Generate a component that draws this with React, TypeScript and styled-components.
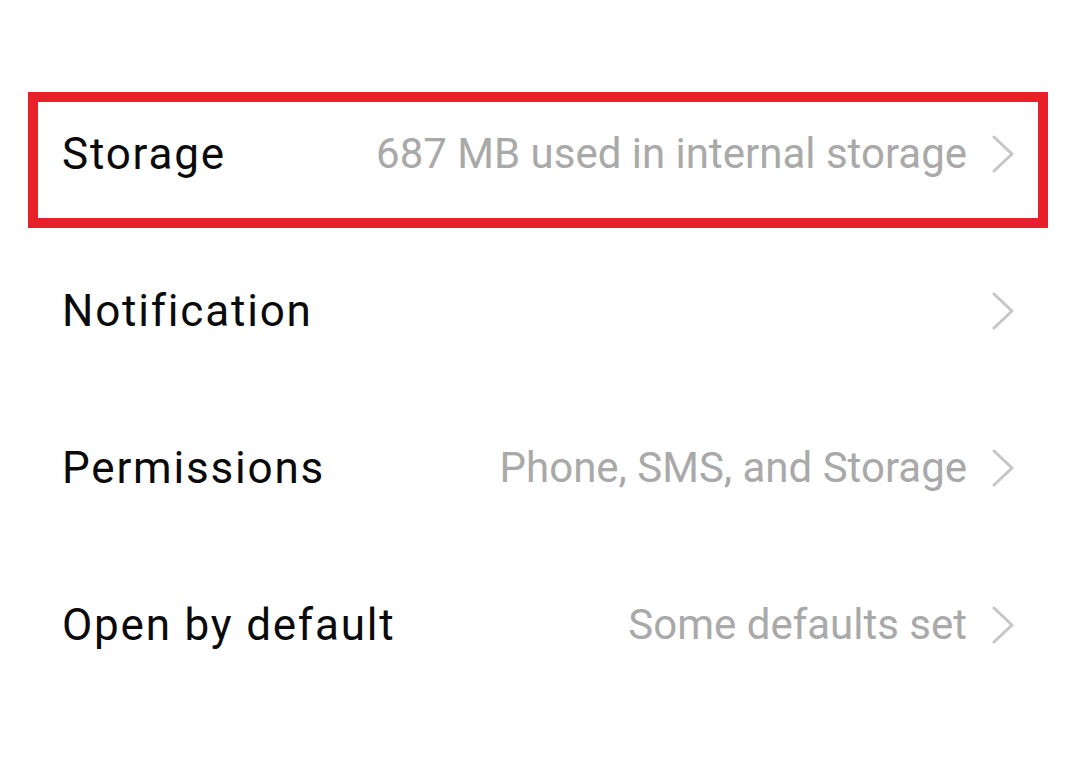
import React from 'react';
import styled, { createGlobalStyle } from 'styled-components';

const GlobalStyle = createGlobalStyle`
  html, body {
    margin: 0;
    padding: 0;
    background: #ffffff;
  }
  body {
    font-family: Roboto, "Noto Sans", "Liberation Sans", sans-serif;
    -webkit-font-smoothing: antialiased;
  }
`;

const Page = styled.div`
  width: 1080px;
  height: 760px;
  background: #ffffff;
  box-sizing: border-box;
  padding: 92px 32px 0 28px;
`;

const List = styled.ul`
  list-style: none;
  margin: 0;
  padding: 0;
  display: flex;
  flex-direction: column;
  gap: 21px;
`;

const Row = styled.li<{ $highlighted?: boolean }>`
  height: 136px;
  box-sizing: border-box;
  border: 10px solid ${(p) => (p.$highlighted ? '#e8202a' : 'transparent')};
  padding: 0 23px 12px 24px;
  display: flex;
  align-items: center;
  gap: 24px;
`;

const Title = styled.span`
  flex: 1;
  font-size: 44px;
  line-height: 1;
  letter-spacing: 1.8px;
  color: #0a0a0a;
  white-space: nowrap;
`;

const Value = styled.span`
  font-size: 42px;
  line-height: 1;
  letter-spacing: 0;
  color: #a9a9a9;
  white-space: nowrap;
`;

const Chevron = () => (
  <svg width="24" height="38" viewBox="0 0 24 38" fill="none">
    <path
      d="M3 2 L21 19 L3 36"
      stroke="#c6c6c6"
      strokeWidth="3"
      strokeLinecap="round"
      strokeLinejoin="round"
    />
  </svg>
);

const items = [
  { title: 'Storage', value: '687 MB used in internal storage', highlighted: true },
  { title: 'Notification', value: '' },
  { title: 'Permissions', value: 'Phone, SMS, and Storage' },
  { title: 'Open by default', value: 'Some defaults set' },
];

export default function App() {
  return (
    <>
      <GlobalStyle />
      <Page>
        <List>
          {items.map((item) => (
            <Row key={item.title} $highlighted={item.highlighted}>
              <Title>{item.title}</Title>
              {item.value && <Value>{item.value}</Value>}
              <Chevron />
            </Row>
          ))}
        </List>
      </Page>
    </>
  );
}
